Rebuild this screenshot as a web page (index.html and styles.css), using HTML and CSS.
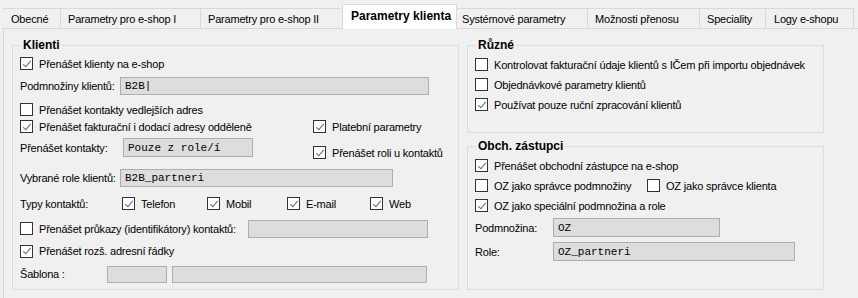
FILE: index.html
```html
<!DOCTYPE html>
<html lang="cs">
<head>
    <meta charset="UTF-8">
    <title>Parametry klienta</title>
    <link rel="stylesheet" href="styles.css">
</head>
<body>
    <!-- Tab strip -->
    <div class="tabs">
        <div class="tab w-obecne">Obecné</div>
        <div class="tab w-es1">Parametry pro e-shop I</div>
        <div class="tab w-es2">Parametry pro e-shop II</div>
        <div class="tab active w-klient">Parametry klienta</div>
        <div class="tab w-sys">Systémové parametry</div>
        <div class="tab w-moz">Možnosti přenosu</div>
        <div class="tab w-spec">Speciality</div>
        <div class="tab last w-logy">Logy e-shopu</div>
    </div>

    <div class="panel">
        <!-- Left group -->
        <fieldset class="group group-klienti">
            <legend>Klienti</legend>

            <div class="row r1">
                <span class="cb checked"></span><span class="lbl">Přenášet klienty na e-shop</span>
            </div>
            <div class="row r2">
                <span class="cap w100">Podmnožiny klientů:</span>
                <span class="field mono f-podm">B2B|</span>
            </div>
            <div class="row r3">
                <span class="cb"></span><span class="lbl">Přenášet kontakty vedlejších adres</span>
            </div>
            <div class="row r4">
                <div class="col-left">
                    <span class="cb checked"></span><span class="lbl">Přenášet fakturační i dodací adresy odděleně</span>
                </div>
                <div class="col-right">
                    <span class="cb checked"></span><span class="lbl">Platební parametry</span>
                </div>
            </div>
            <div class="row r5">
                <div class="col-left">
                    <span class="cap w103">Přenášet kontakty:</span>
                    <span class="field mono f-kont">Pouze z role/í</span>
                </div>
                <div class="col-right low">
                    <span class="cb checked"></span><span class="lbl">Přenášet roli u kontaktů</span>
                </div>
            </div>
            <div class="row r6">
                <span class="cap w98">Vybrané role klientů:</span>
                <span class="field mono f-role">B2B_partneri</span>
            </div>
            <div class="row r7">
                <span class="cap w102">Typy kontaktů:</span>
                <span class="ct ct1"><span class="cb checked"></span><span class="lbl">Telefon</span></span>
                <span class="ct ct2"><span class="cb checked"></span><span class="lbl">Mobil</span></span>
                <span class="ct ct3"><span class="cb checked"></span><span class="lbl">E-mail</span></span>
                <span class="ct"><span class="cb checked"></span><span class="lbl">Web</span></span>
            </div>
            <div class="row r8">
                <span class="cb"></span><span class="lbl w209">Přenášet průkazy (identifikátory) kontaktů:</span>
                <span class="field f-prukaz"></span>
            </div>
            <div class="row r9">
                <span class="cb checked"></span><span class="lbl">Přenášet rozš. adresní řádky</span>
            </div>
            <div class="row r10">
                <span class="cap w87">Šablona :</span>
                <span class="field f-sab1"></span>
                <span class="field f-sab2"></span>
            </div>
        </fieldset>

        <!-- Right column -->
        <div class="right">
            <fieldset class="group group-ruzne">
                <legend>Různé</legend>
                <div class="row q1">
                    <span class="cb"></span><span class="lbl">Kontrolovat fakturační údaje klientů s IČem při importu objednávek</span>
                </div>
                <div class="row q2">
                    <span class="cb"></span><span class="lbl">Objednávkové parametry klientů</span>
                </div>
                <div class="row q2">
                    <span class="cb checked"></span><span class="lbl">Používat pouze ruční zpracování klientů</span>
                </div>
            </fieldset>

            <fieldset class="group group-oz">
                <legend>Obch. zástupci</legend>
                <div class="row q1">
                    <span class="cb checked"></span><span class="lbl">Přenášet obchodní zástupce na e-shop</span>
                </div>
                <div class="row q2">
                    <span class="oz-half"><span class="cb"></span><span class="lbl">OZ jako správce podmnožiny</span></span>
                    <span class="cb"></span><span class="lbl">OZ jako správce klienta</span>
                </div>
                <div class="row q2">
                    <span class="cb checked"></span><span class="lbl">OZ jako speciální podmnožina a role</span>
                </div>
                <div class="row q4">
                    <span class="cap w78">Podmnožina:</span>
                    <span class="field mono f-ozp">OZ</span>
                </div>
                <div class="row q5">
                    <span class="cap w78">Role:</span>
                    <span class="field mono f-ozr">OZ_partneri</span>
                </div>
            </fieldset>
        </div>
    </div>
</body>
</html>
```

FILE: styles.css
```css
body {
    margin: 0;
    background-color: #f0f0f0;
    font-family: "Liberation Sans", Arial, sans-serif;
    font-size: 11px;
    letter-spacing: -0.2px;
    color: #000000;
    overflow: hidden;
    height: 298px;
}

/* Tab strip */
.tabs {
    display: flex;
    align-items: flex-end;
    height: 28px;
    border-bottom: 1px solid #d9d9d9;
    margin-left: 2px;
}
.tab {
    box-sizing: border-box;
    height: 20px;
    border: 1px solid #d9d9d9;
    border-right: none;
    border-bottom: none;
    display: flex;
    align-items: center;
    padding-left: 7px;
    font-size: 11px;
    letter-spacing: -0.2px;
    white-space: nowrap;
}
.tab.last {
    border-right: 1px solid #d9d9d9;
}
.tab.active {
    height: 25px;
    margin-bottom: -1px;
    padding-left: 8px;
    background-color: #ffffff;
    font-weight: bold;
    font-size: 12px;
    letter-spacing: 0;
    padding-bottom: 2px;
    border-right: 1px solid #d9d9d9;
}
.tab.active + .tab {
    border-left: none;
    padding-left: 5px;
}
.w-obecne { width: 58px; border-left: none; padding-left: 9px; }
.w-es1 { width: 140px; }
.w-es2 { width: 142px; }
.w-klient { width: 115px; }
.w-sys { width: 130px; }
.w-moz { width: 112px; }
.w-spec { width: 66px; }
.w-logy { width: 89px; padding-left: 8px; }

/* Panel */
.panel {
    margin-left: 3px;
    border-left: 1px solid #d9d9d9;
    height: 259px;
    display: flex;
    gap: 8px;
    padding: 10px 0 0 8px;
}
.group {
    margin: 0;
    border: 1px solid #dcdcdc;
    padding: 0 0 0 7px;
    box-sizing: border-box;
}
.group legend {
    font-weight: bold;
    font-size: 12px;
    letter-spacing: 0;
    padding: 0 2px;
    margin-left: 1px;
    line-height: 13px;
}
.group-klienti {
    width: 447px;
    height: 251px;
}
.right {
    display: flex;
    flex-direction: column;
    gap: 7px;
}
.group-ruzne {
    width: 357px;
    height: 94px;
}
.group-oz {
    width: 357px;
    height: 150px;
}

/* Rows */
.row {
    display: flex;
    align-items: center;
    white-space: nowrap;
}
.r1 { height: 13px; margin-top: 5px; }
.r2 { height: 18px; margin-top: 7px; }
.r3 { height: 13px; margin-top: 8px; }
.r4 { height: 13px; margin-top: 4px; }
.r5 { height: 19px; margin-top: 5px; align-items: flex-start; }
.r6 { height: 18px; margin-top: 12px; }
.r7 { height: 13px; margin-top: 10px; }
.r8 { height: 18px; margin-top: 9.5px; }
.r9 { height: 13px; margin-top: 7px; }
.r10 { height: 17px; margin-top: 8px; }

.q1 { height: 13px; margin-top: 6px; }
.q2 { height: 13px; margin-top: 7px; }
.q4 { height: 19px; margin-top: 6px; }
.q5 { height: 19px; margin-top: 5px; }

.col-left {
    display: flex;
    align-items: center;
    width: 293px;
    height: 100%;
}
.col-right {
    display: flex;
    align-items: center;
}
.col-right.low {
    margin-top: 8px;
}

/* Checkbox */
.cb {
    box-sizing: border-box;
    width: 13px;
    height: 13px;
    border: 1px solid #333333;
    background-color: #ffffff;
    position: relative;
    flex-shrink: 0;
}
.cb.checked::after {
    content: "";
    position: absolute;
    left: 3.5px;
    top: 0.5px;
    width: 3px;
    height: 7px;
    border-right: 1.3px solid #666666;
    border-bottom: 1.3px solid #666666;
    transform: rotate(40deg);
}
.lbl {
    margin-left: 6px;
}
.cap {
    display: inline-block;
}
.w100 { width: 100px; }
.w103 { width: 103px; }
.w98 { width: 100px; }
.w102 { width: 102px; }
.w87 { width: 87px; }
.w78 { width: 78px; }
.w209 { width: 209px; }

.ct {
    display: flex;
    align-items: center;
}
.ct1 { width: 85px; }
.ct2 { width: 80px; }
.ct3 { width: 83px; }

.oz-half {
    display: flex;
    align-items: center;
    width: 172px;
}

/* Read-only fields */
.field {
    box-sizing: border-box;
    display: flex;
    align-items: center;
    height: 100%;
    background-color: #dddddd;
    border: 1px solid #adadb6;
    padding-left: 4px;
}
.mono {
    font-family: "Liberation Mono", "Courier New", monospace;
    font-size: 11px;
    letter-spacing: 0;
}
.f-podm { width: 309px; }
.f-kont { width: 130px; }
.f-role { width: 273px; }
.f-prukaz { width: 180px; }
.f-sab1 { width: 60px; }
.f-sab2 { width: 255px; margin-left: 5px; }
.f-ozp { width: 167px; }
.f-ozr { width: 242px; }
```
